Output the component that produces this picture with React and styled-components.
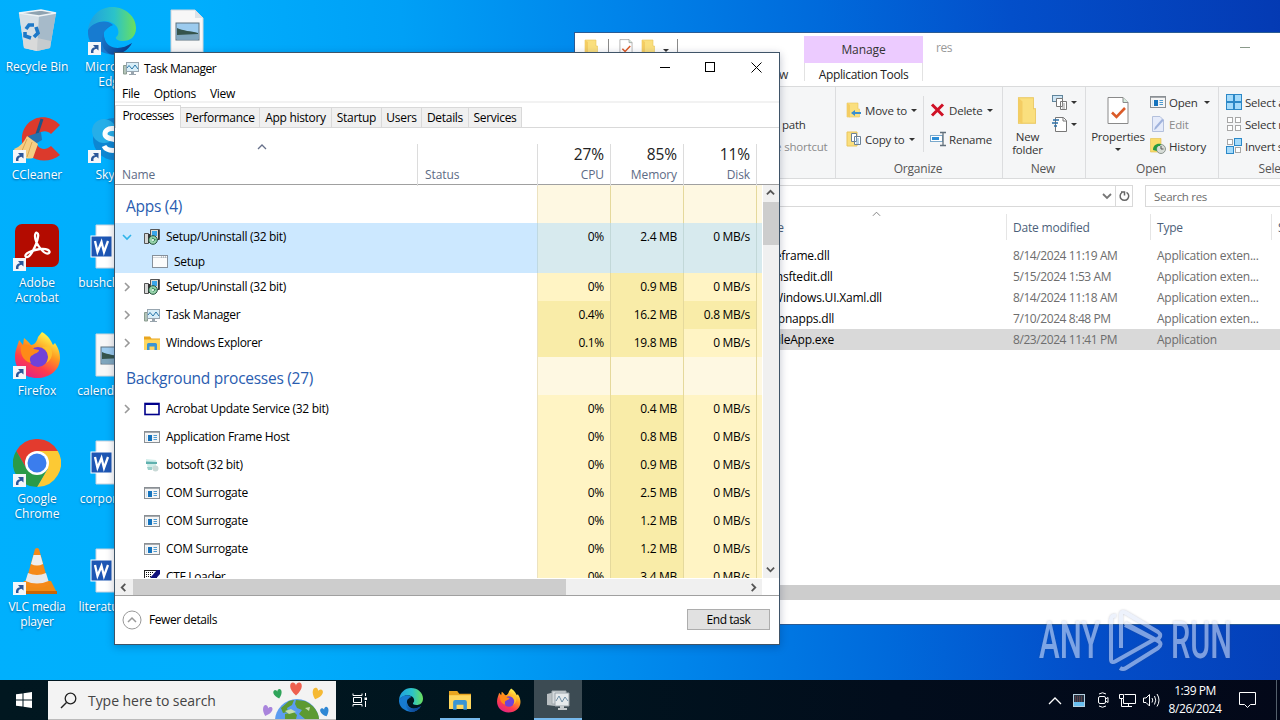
import React from "react";
import styled, { createGlobalStyle } from "styled-components";

const GlobalStyle = createGlobalStyle`
  * {
    box-sizing: border-box;
  }

  body {
    margin: 0;
    overflow: hidden;
    font-family: "Open Sans", "Noto Sans", sans-serif;
    font-size: 12px;
    line-height: 15px;
    letter-spacing: -0.2px;
    white-space: nowrap;
    color: #000;
  }

  svg {
    display: block;
    flex: none;
  }
`;

const Desktop = styled.div`
  position: relative;
  width: 1280px;
  height: 720px;
  overflow: hidden;
  display: flex;
  flex-direction: column;
  justify-content: space-between;
  background: linear-gradient(
    84deg,
    #00b0fd 0%,
    #00aefd 20%,
    #00a0f6 35%,
    #0084ea 51%,
    #006adb 66%,
    #034fca 80%,
    #043ab3 100%
  );
`;

/* desktop shortcuts */

const ShortcutGrid = styled.div`
  display: grid;
  grid-template-columns: repeat(3, 75px);
  grid-auto-rows: 108px;
  padding-top: 7px;
`;

const Shortcut = styled.div`
  display: flex;
  flex-direction: column;
  align-items: center;
  gap: 4px;
  color: #fff;
  text-align: center;
  letter-spacing: ${(p) => p.$spacing || "0"};
  text-shadow: 0 1px 2px rgba(0, 40, 90, 0.6);
  white-space: pre-line;
  padding-right: 1px;
`;

const ShortcutIcon = styled.div`
  position: relative;
  width: 48px;
  height: 48px;
`;

const ArrowBadge = styled.svg`
  position: absolute;
  left: 0;
  bottom: 0;
`;

/* windows */

const ExplorerWindow = styled.div`
  position: absolute;
  left: 574px;
  top: 32px;
  width: 760px;
  height: 593px;
  border: 1px solid #2a5b94;
  background: #fff;
  display: flex;
  flex-direction: column;
`;

const TitleRow = styled.div`
  height: 30px;
  display: flex;
  padding-left: 9px;
`;

const QuickAccess = styled.div`
  width: 220px;
  padding-top: 6px;
  display: flex;
  gap: 8px;
`;

const QuickDivider = styled.div`
  width: 1px;
  height: 14px;
  background: #8a8a8a;
  margin-right: 2px;
`;

const ManageTab = styled.div`
  width: 119px;
  height: 27px;
  margin-top: 3px;
  background: #eccbff;
  color: #333;
  text-align: center;
  line-height: 28px;
  letter-spacing: -0.1px;
`;

const WindowTitle = styled.div`
  width: 317px;
  padding: 7px 0 0 13px;
  color: #999;
  letter-spacing: -0.4px;
`;

const MinimizeMark = styled.div`
  width: 10px;
  height: 1px;
  margin-top: 14px;
  background: #8a9a8a;
`;

const RibbonTabs = styled.div`
  height: 23px;
  display: flex;
  line-height: 24px;
`;

const ViewTab = styled.div`
  width: 229px;
  padding-right: 16px;
  text-align: right;
  color: #333;
`;

const ToolsTab = styled.div`
  width: 119px;
  height: 18px;
  text-align: center;
  border: solid #e2e2e2;
  border-width: 0 1px;
  color: #222;
  letter-spacing: -0.35px;
`;

const Ribbon = styled.div`
  height: 93px;
  display: flex;
  background: #f5f6f7;
  border-top: 1px solid #dadbdc;
  border-bottom: 1px solid #dadbdc;
  color: #333;
`;

const RibbonGroup = styled.div`
  width: ${(p) => p.$width}px;
  flex: none;
  display: flex;
  flex-direction: column;
  justify-content: space-between;
  border-right: 1px solid #dcdddf;
  padding-bottom: 2px;
`;

const RibbonTools = styled.div`
  display: flex;
  height: 73px;
`;

const GroupCaption = styled.div`
  text-align: center;
  color: #555;
  padding-left: ${(p) => p.$shift || 0}px;
  padding-right: 2px;
`;

const ToolColumn = styled.div`
  display: flex;
  flex-direction: column;
  gap: ${(p) => p.$gap}px;
  padding: ${(p) => p.$padding};
  width: ${(p) => (p.$width ? `${p.$width}px` : "auto")};
`;

const Tool = styled.div`
  display: flex;
  align-items: center;
  gap: 3px;
  height: 16px;
  font-size: 11.5px;
  color: ${(p) => (p.$disabled ? "#8b8b8b" : "#333")};
  letter-spacing: ${(p) => p.$spacing || "-0.2px"};
`;

const ToolDivider = styled.div`
  width: 1px;
  height: 56px;
  margin-top: 9px;
  background: #dcdddf;
`;

const BigTool = styled.div`
  width: ${(p) => p.$width}px;
  padding-top: 9px;
  display: flex;
  flex-direction: column;
  align-items: center;
  gap: 5px;
  text-align: center;
  white-space: pre-line;
  font-size: 11.5px;
  line-height: 13px;
  letter-spacing: -0.2px;
`;

const DownMark = styled.i`
  border: solid transparent;
  border-width: 3px 3px 0;
  border-top-color: #333;
  width: 0;
  height: 0;
  margin: ${(p) => p.$margin || "0 0 0 1px"};
`;

const AddressRow = styled.div`
  display: flex;
  gap: 12px;
  height: 31px;
  padding-top: 6px;
`;

const AddressBox = styled.div`
  width: 558px;
  height: 22px;
  border: 1px solid #d9d9d9;
  display: flex;
  justify-content: flex-end;
`;

const AddressButton = styled.div`
  width: 17px;
  display: flex;
  align-items: center;
  justify-content: center;
  border-left: 1px solid ${(p) => (p.$divided ? "#d9d9d9" : "transparent")};
`;

const SearchBox = styled.div`
  flex: 1;
  height: 22px;
  border: 1px solid #d9d9d9;
  padding: 3px 8px;
  color: #6d6d6d;
  font-size: 11.5px;
  letter-spacing: -0.3px;
`;

const FileHeader = styled.div`
  display: grid;
  grid-template-columns: 432px 144px 121px 60px;
  height: 35px;
  padding-top: 4px;
  color: #4c5f7a;
`;

const FileHeaderCell = styled.div`
  position: relative;
  height: 26px;
  border-right: 1px solid #e5e5e5;
  padding: ${(p) => p.$padding || "6px 0 0 6px"};
`;

const FileRow = styled.div`
  display: grid;
  grid-template-columns: 431px 144px 181px;
  height: 21px;
  line-height: 22px;
  background: ${(p) => (p.$selected ? "#d9d9d9" : "#fff")};
`;

const FileName = styled.div`
  padding-left: 197px;
`;

const FileMeta = styled.div`
  padding-left: 7px;
  color: #6d6d6d;
  letter-spacing: ${(p) => p.$spacing || "-0.42px"};
`;

const FileScroll = styled.div`
  height: 15px;
  margin-top: auto;
  margin-bottom: 24px;
  background: #cdcdcd;
`;

const TaskWindow = styled.div`
  position: absolute;
  left: 114px;
  top: 52px;
  width: 666px;
  height: 593px;
  border: 1px solid #3f5468;
  background: #fff;
  display: flex;
  flex-direction: column;
  box-shadow: 0 2px 8px rgba(0, 20, 60, 0.25);
`;

const TaskTitle = styled.div`
  height: 30px;
  display: flex;
  align-items: center;
  gap: 5px;
  padding-left: 8px;
  letter-spacing: -0.5px;
`;

const WindowButtons = styled.div`
  margin-left: auto;
  display: flex;
  padding-bottom: 1px;
`;

const WindowButton = styled.div`
  width: 45.5px;
  display: flex;
  justify-content: center;
`;

const MenuBar = styled.div`
  height: 20px;
  display: flex;
  gap: 14px;
  padding: 3px 7px 0;
  border-bottom: 2px solid #f2f2f2;
  letter-spacing: -0.3px;
`;

const TabStrip = styled.div`
  height: 25px;
  display: flex;
  align-items: flex-end;
  border-bottom: 1px solid #d9d9d9;
`;

const Tab = styled.div`
  width: ${(p) => p.$width}px;
  height: ${(p) => (p.$active ? 23 : 20)}px;
  margin-bottom: ${(p) => (p.$active ? -1 : 0)}px;
  line-height: 20px;
  text-align: center;
  letter-spacing: ${(p) => (p.$active ? "-0.5px" : "-0.3px")};
  background: ${(p) => (p.$active ? "#fff" : "#f0f0f0")};
  border: 1px solid #d9d9d9;
  border-left-width: ${(p) => (p.$active ? 1 : 0)}px;
  border-bottom: 0;
`;

const columns = "303px 120px 73px 73px 73px 1fr";

const TableHead = styled.div`
  display: grid;
  grid-template-columns: ${columns};
  height: 57px;
  padding-top: 16px;
  border-bottom: 1px solid #a0a0a0;
`;

const HeadCell = styled.div`
  position: relative;
  display: flex;
  flex-direction: column;
  justify-content: flex-end;
  align-items: ${(p) => (p.$numeric ? "flex-end" : "flex-start")};
  padding: 0 6px 4px 7px;
  border-right: 1px solid ${(p) => (p.$last ? "transparent" : "#dcdcdc")};
  color: #5d6b85;
  letter-spacing: -0.1px;
`;

const Total = styled.div`
  font-size: 15.5px;
  line-height: 20px;
  margin-bottom: 3px;
  color: #222;
  letter-spacing: -0.1px;
`;

const SortMark = styled.svg`
  position: absolute;
  left: 142px;
  top: 0;
`;

const FileSortMark = styled.svg`
  position: absolute;
  left: 297px;
  top: -3px;
`;

const TableArea = styled.div`
  height: 394px;
  display: flex;
`;

const Rows = styled.div`
  width: 647px;
  height: 393px;
  overflow: hidden;
`;

const Row = styled.div`
  display: grid;
  grid-template-columns: ${columns};
  height: ${(p) => p.$height}px;
  background: ${(p) => (p.$selected ? "#cce8ff" : "#fff")};
`;

const NameCell = styled.div`
  grid-column: span 2;
  display: flex;
  align-items: center;
  padding-left: ${(p) => (p.$child ? 37 : 7)}px;
  border-right: 1px solid ${(p) => (p.$selected ? "#bfd9e2" : "#ece2c0")};
`;

const ProcessName = styled.div`
  padding-bottom: 1px;
  letter-spacing: -0.32px;
`;

const Expander = styled.div`
  width: 22px;
  padding-bottom: 1px;
`;

const ProcessIcon = styled.div`
  width: 22px;
`;

const GroupName = styled(NameCell)`
  padding: 5px 0 0 11px;
  font-size: 15.5px;
  letter-spacing: -0.27px;
  color: #2a5db0;
`;

const heat = {
  group: "#fef8e2",
  low: "#fff4c4",
  high: "#f9eca8",
  selected: "#d7eaee",
};

const ValueCell = styled.div`
  background: ${(p) => heat[p.$heat]};
  border-right: 1px solid ${(p) => (p.$heat === "selected" ? "#c2d8d8" : "#e5d99c")};
  padding: 0 6px 1px 0;
  display: flex;
  align-items: center;
  justify-content: flex-end;
  letter-spacing: -0.3px;
`;

const EdgeCell = styled.div`
  background: ${(p) => heat[p.$heat]};
`;

const VerticalScroll = styled.div`
  width: 16px;
  margin-left: auto;
  background: #f0f0f0;
  height: 393px;
  display: flex;
  flex-direction: column;
  align-items: center;
`;

const VerticalThumb = styled.div`
  width: 16px;
  height: 43px;
  margin-bottom: auto;
  background: #cdcdcd;
`;

const ScrollArrow = styled.div`
  width: 17px;
  height: 17px;
  padding-right: 1px;
  display: flex;
  align-items: center;
  justify-content: center;
`;

const HorizontalScroll = styled.div`
  height: 16px;
  width: 647px;
  display: flex;
  justify-content: space-between;
  align-items: center;
  background: #f0f0f0;
`;

const HorizontalThumb = styled.div`
  width: 433px;
  height: 16px;
  background: #cdcdcd;
  margin: 0 auto 0 1px;
`;

const TaskFooter = styled.div`
  flex: 1;
  border-top: 1px solid #a0a0a0;
  display: flex;
  align-items: center;
  gap: 7px;
  padding: 0 9px 1px 7px;
  letter-spacing: -0.45px;
`;

const EndButton = styled.div`
  width: 83px;
  height: 21px;
  margin-left: auto;
  border: 1px solid #adadad;
  background: #e1e1e1;
  text-align: center;
  line-height: 19px;
`;

/* watermark */

const Watermark = styled.div`
  position: absolute;
  left: 1039px;
  top: 608px;
  width: 194px;
  height: 64px;
  display: flex;
  justify-content: space-between;
  align-items: center;
  color: #e0e8fb;
  opacity: 0.55;
  filter: drop-shadow(0 0 1px rgba(60, 70, 100, 0.5));
`;

const WatermarkWord = styled.div`
  width: 62px;
  padding-top: 2px;
  font-family: Roboto, sans-serif;
  font-size: 51px;
  line-height: 64px;
  font-weight: 500;
  letter-spacing: 0;
  transform: scaleX(${(p) => p.$squeeze});
  transform-origin: left;
`;

/* taskbar */

const Taskbar = styled.div`
  height: 40px;
  display: flex;
  background: linear-gradient(90deg, #011720, #00151f 40%, #020d1c 70%, #030819);
`;

const TaskbarSlot = styled.div`
  width: ${(p) => p.$width}px;
  display: flex;
  align-items: center;
  justify-content: center;
  background: ${(p) => (p.$active ? "#3c4b53" : "transparent")};
  box-shadow: ${(p) => (p.$running ? "inset 0 -2px 0 #76b9ed" : "none")};
  margin: ${(p) => p.$margin || 0};
`;

const TaskbarSearch = styled.div`
  width: 288px;
  margin-top: 1px;
  background: #f3f3f3;
  border-bottom: 1px solid #bbb;
  display: flex;
  align-items: center;
  padding-left: 12px;
  color: #444;
  font-size: 14px;
  letter-spacing: -0.05px;
  gap: 11px;
`;

const SearchArt = styled.svg`
  margin-left: auto;
`;

const Tray = styled.div`
  margin-left: auto;
  display: flex;
  align-items: center;
  color: #fff;
`;

const TraySlot = styled.div`
  width: 24px;
  display: flex;
  justify-content: center;
`;

const Clock = styled.div`
  width: 64px;
  text-align: center;
  line-height: 18px;
  letter-spacing: -0.45px;
`;

const ShowDesktop = styled.div`
  width: 4px;
  height: 40px;
  border-left: 1px solid #55606c;
`;

/* icons */

const Chevron = ({ dir, color = "#555", size = 8, weight = 1.6 }) => {
  const d = {
    up: "M1 6 5 2 9 6",
    down: "M1 3 5 7 9 3",
    left: "M7 1 3 5 7 9",
    right: "M3 1 7 5 3 9",
  }[dir];
  return (
    <svg width={size} height={size} viewBox="0 0 10 10">
      <path d={d} fill="none" stroke={color} strokeWidth={weight} />
    </svg>
  );
};

const ShortcutArrow = () => (
  <ArrowBadge width="13" height="13" viewBox="0 0 13 13">
    <rect width="13" height="13" fill="#f4f6fa" />
    <path d="M3 11C2.500 7.500 4 5.500 7 5.200L5 3H10.500V8.500L8.500 6.700C6 7 5 8.500 5.500 11Z" fill="#2b579a" />
  </ArrowBadge>
);

const RecycleBin = () => (
  <svg width="48" height="48" viewBox="0 0 48 48">
    <path d="M6 6 28 3 43 6 37 41 24 44 11 41Z" fill="#c5d3de" />
    <path d="M6 6 26 9 24 44 11 41Z" fill="#d5dfe6" />
    <path d="M26 9 43 6 37 41 24 44Z" fill="#a6bac9" />
    <path d="M6 6 28 3 43 6 26 9Z" fill="#8fa3b1" stroke="#eef3f6" strokeWidth="1.500" />
    <path d="M10 33 24 31 38 34 37 41 24 44 11 41Z" fill="#dcd7d2" opacity="0.600" />
    <g fill="none" stroke="#1c78c8" strokeWidth="3.600">
      <path d="M13 22 16 18 21 18" />
      <path d="M23 20 25 26 21 30" />
      <path d="M18 31 12 29 12 25" />
    </g>
  </svg>
);

const EdgeLogo = ({ size }) => (
  <svg width={size} height={size} viewBox="0 0 48 48">
    <defs>
      <linearGradient id="edgeTop" x1="0" x2="1">
        <stop offset="0" stopColor="#1f9fe0" />
        <stop offset="0.550" stopColor="#2bc3c9" />
        <stop offset="1" stopColor="#6be05c" />
      </linearGradient>
      <linearGradient id="edgeLow" x1="0" x2="1" y2="0.600">
        <stop offset="0" stopColor="#1b83d8" />
        <stop offset="1" stopColor="#0c3f8e" />
      </linearGradient>
    </defs>
    <path d="M0 23C2 9 12 0 24 0 38 0 48 10 48 21 48 30 42 34 35 34 30 34 27 32 28 30 31 28 31 24 29 20 23 11 8 13 0 23Z" fill="url(#edgeTop)" />
    <path d="M0 23C6 14 19 12 25 18 17 19 14 26 17 33 21 43 34 44 44 36 39 45 30 49 20 47 7 44-1 35 0 23Z" fill="#177bd0" />
    <path d="M25 18C17 18 14 26 17 33 21 43 34 43 44 36 39 45 30 49 22 47 11 42 10 24 25 18Z" fill="url(#edgeLow)" />
  </svg>
);

const FirefoxLogo = ({ size, id }) => (
  <svg width={size} height={size} viewBox="0 0 48 48">
    <defs>
      <linearGradient id={id} x1="0.800" y1="0" x2="0.250" y2="1">
        <stop offset="0.100" stopColor="#fff04a" />
        <stop offset="0.400" stopColor="#ff9a1f" />
        <stop offset="0.700" stopColor="#ff3d4c" />
        <stop offset="1" stopColor="#e0208a" />
      </linearGradient>
    </defs>
    <path d="M29 1C36 5 38 10 40 14L42 12C46 18 47 23 47 27 47 39 37 47 24 47 11 47 2 38 2 26 2 19 5 14 6 9L10 14 11 7C14 9 16 12 18 14 22 14 24 10 25 6Z" fill={`url(#${id})`} />
    <circle cx="25" cy="26" r="10" fill="#7042d8" />
    <path d="M8 15C13 12 18 14 21 18L26 19C26 22 22 22 20 24 17 25 16 28 18 32 9 30 7 21 8 15Z" fill="#ff8a18" />
    <path d="M29 16C35 19 37 27 33 32 39 29 41 22 37 15Z" fill="#ffc52e" opacity="0.800" />
  </svg>
);

const ChromeLogo = () => (
  <svg width="48" height="48" viewBox="0 0 48 48">
    <path d="M24 24 3.200 12A24 24 0 0 1 44.800 12Z" fill="#e33b2e" />
    <path d="M24 12H44.800A24 24 0 0 1 24 48L34.500 30Z" fill="#fcc934" />
    <path d="M3.200 12 13.600 30 24 24V12Z" fill="#e33b2e" />
    <path d="M3.200 12A24 24 0 0 0 24 48L34.500 30H13.600Z" fill="#2a9a48" />
    <circle cx="24" cy="24" r="12" fill="#fff" />
    <circle cx="24" cy="24" r="9.500" fill="#3b7ded" />
  </svg>
);

const CCleanerLogo = () => (
  <svg width="48" height="48" viewBox="0 0 48 48">
    <path d="M47 10 38 19C33 14 24 16 23 25 23 33 31 37 38 31L47 40C33 51 11 45 9 27 7 4 32-6 47 10Z" fill="#dc3a2c" />
    <path d="M29 4 23 22" stroke="#1d5587" strokeWidth="3" />
    <path d="M15 21 28 17 29 25 22 29Z" fill="#2673b0" />
    <path d="M14 21 25 29 20 43C14 45 5 42 1 34 7 32 11 27 14 21Z" fill="#f5ce83" />
    <path d="M14 24 8 38M19 27 14 42" stroke="#d9a652" />
  </svg>
);

const SkypeLogo = () => (
  <svg width="48" height="48" viewBox="0 0 48 48">
    <circle cx="26" cy="24" r="21" fill="#0d86d2" />
    <circle cx="16" cy="16" r="12" fill="#26aee8" />
    <path d="M33 17C30 12 17 12 17 19 17 26 33 22 33 30 33 37 19 37 16 31" fill="none" stroke="#fff" strokeWidth="5" />
  </svg>
);

const AcrobatLogo = () => (
  <svg width="48" height="48" viewBox="0 0 48 48">
    <rect x="2" y="1" width="44" height="43" rx="7" fill="#b30b00" />
    <path d="M13 34C10 31 19 27 27 26 34 25 38 28 36 30 32 33 22 21 22 13 22 8 26 9 25 14 24 21 17 36 13 34Z" fill="none" stroke="#fff" strokeWidth="2.300" />
  </svg>
);

const VlcLogo = () => (
  <svg width="48" height="48" viewBox="0 0 48 48">
    <path d="M11 34H38L44 46H5Z" fill="#f08a15" />
    <path d="M5 44H44V47H5Z" fill="#c96505" />
    <path d="M22 2Q24 0 26 2L36 38Q24 44 12 38Z" fill="#f58a18" />
    <path d="M20.500 8H27.500L30 17Q24 20 18 17Z" fill="#eee" />
    <path d="M15 26Q24 30 33 26L35.500 34Q24 39 12.500 34Z" fill="#e8e8e8" />
  </svg>
);

const WordDocument = () => (
  <svg width="48" height="48" viewBox="0 0 48 48">
    <path d="M8 2H33L41 10V45H8Z" fill="#fff" stroke="#c9d3df" />
    <rect x="3" y="13" width="21" height="21" fill="#1d56b4" stroke="#fff" />
    <path d="M7 18 9.500 29 13.500 19 16 29 20 18" fill="none" stroke="#fff" strokeWidth="2.300" />
  </svg>
);

const PictureDocument = () => (
  <svg width="48" height="48" viewBox="0 0 48 48">
    <path d="M8 3H32L40 11V45H8Z" fill="#f7f7f7" stroke="#d0d6db" />
    <path d="M32 3V11H40Z" fill="#dbe2e8" />
    <rect x="13" y="16" width="23" height="17" fill="#9ccbee" stroke="#5d7380" />
    <path d="M14 21C20 24 28 24 35 26V29H14Z" fill="#35544c" />
    <path d="M14 28 35 27V32H14Z" fill="#7fa6bd" />
  </svg>
);

const MonitorIcon = ({ size = 16 }) => (
  <svg width={size} height={size} viewBox="0 0 16 16">
    <path d="M.5 5.500H3.500V14H.5Z" fill="#b3c4b8" stroke="#8a9c90" />
    <rect x="3.500" y="2.500" width="12" height="9" fill="#d8eef8" stroke="#98a6b0" />
    <path d="M4 8 6 5.500 9 9 12 5 15 9" fill="none" stroke="#2a78aa" />
    <path d="M8 12H11V14H13V15H6V14H8Z" fill="#98a4ad" />
  </svg>
);

const StackedMonitors = () => (
  <svg width="24" height="24" viewBox="0 0 24 24">
    <path d="M1 6 9 4V18L1 17Z" fill="#b9bfc2" />
    <path d="M6 3H20V16H6Z" fill="#d5dadd" stroke="#a1a9ad" />
    <path d="M9 5H23V18H9Z" fill="#e6eaec" stroke="#9ba4aa" />
    <path d="M10 13 13 8 16 14 19 9 22 13" fill="none" stroke="#6e8da3" />
    <path d="M14 18H18V20H21V22H12V20H14Z" fill="#c4c9cc" />
  </svg>
);

const InstallerIcon = () => (
  <svg width="16" height="16" viewBox="0 0 16 16">
    <path d="M.5 4.500H4.500V14.500H.5Z" fill="#d6d6d6" stroke="#555" />
    <path d="M6.500.5H15.500V10.500H6.500Z" fill="#dedbd4" stroke="#555" />
    <rect x="8" y="2" width="5" height="5" fill="#3aa5ea" />
    <path d="M14 1H15V11H14Z" fill="#333" />
    <path d="M4 5H6V14H4Z" fill="#333" />
    <circle cx="9" cy="11" r="4.300" fill="#97d3ac" stroke="#23503a" />
    <path d="M8 8.500 12 10.500 9 13Z" fill="#2d8650" />
    <circle cx="9" cy="11" r="1" fill="#fff" />
  </svg>
);

const WindowIcon = () => (
  <svg width="16" height="14" viewBox="0 0 16 14">
    <rect x=".5" y=".5" width="15" height="12" fill="#fbfbfb" stroke="#87909a" />
    <path d="M1 2.500H15" stroke="#d4d8dc" />
    <path d="M9 2H10M11 2H12M13 2H14" stroke="#8a939c" />
  </svg>
);

const ServiceIcon = () => (
  <svg width="16" height="14" viewBox="0 0 16 14">
    <rect x="1" y="1.500" width="14" height="11" fill="#fff" stroke="#00008b" strokeWidth="1.600" />
    <path d="M1 2H15" stroke="#00008b" strokeWidth="2" />
  </svg>
);

const HostIcon = () => (
  <svg width="16" height="12" viewBox="0 0 16 12">
    <rect x=".5" y=".5" width="15" height="11" fill="#f5f5f5" stroke="#8a8f94" />
    <path d="M1 1.500H15" stroke="#a6aaae" />
    <rect x="4" y="4" width="4" height="6" fill="#1573bd" />
    <path d="M9.500 4.500H13M9.500 6.500H13M9.500 8.500H13" stroke="#4f9bd0" />
    <path d="M2 4H3V10H2Z" fill="#cfe3f2" />
  </svg>
);

const BotsoftIcon = () => (
  <svg width="16" height="16" viewBox="0 0 16 16">
    <path d="M2 2 12 3 13 6 2 5Z" fill="#d2eeeb" />
    <path d="M2 4.500 13 5V7H2Z" fill="#5fb0ae" />
    <path d="M3 7H12V12H4Z" fill="#cfece8" />
    <circle cx="11.500" cy="11.500" r="3" fill="#c8d9d6" />
    <path d="M3 10H8V13H4Z" fill="#9bd0cb" />
  </svg>
);

const CtfIcon = () => (
  <svg width="16" height="16" viewBox="0 0 16 16">
    <rect x=".5" y="1.500" width="12" height="12" fill="#fff" stroke="#222" />
    <path d="M2 3.500H10M2 5.500H8M2 7.500H7M2 9.500H6" stroke="#111" strokeDasharray="1 1" />
    <path d="M13 1H16V5L9 13H5L6 9Z" fill="#11117b" />
  </svg>
);

const ExplorerFolder = ({ size = 16 }) => (
  <svg width={size} height={size} viewBox="0 0 16 16">
    <path d="M0 1.500H6L7.500 3.500H16V14.500H0Z" fill="#e9a620" />
    <path d="M0 4.500H16V14.500H0Z" fill="#ffd75e" />
    <path d="M3 15V9.500Q3 8 4.500 8H11.500Q13 8 13 9.500V15H10.500V11.500H5.500V15Z" fill="#3a95d4" />
  </svg>
);

const PlainFolder = ({ width = 16, height = 16, children }) => (
  <svg width={width} height={height} viewBox="0 0 16 16" preserveAspectRatio="none">
    <path d="M1 1H12V7H13.500V15H1Z" fill="#fadf7e" stroke="#eac65c" strokeWidth=".6" />
    <path d="M1 1 4 3V15.500L1 14Z" fill="#f4cd63" />
    {children}
  </svg>
);

const CheckPage = ({ width = 14, height = 17 }) => (
  <svg width={width} height={height} viewBox="0 0 22 28">
    <path d="M1 1H16L21 6V27H1Z" fill="#fff" stroke="#8a8a8a" />
    <path d="M16 1V6H21" fill="#d5eddd" stroke="#8a8a8a" />
    <path d="M5 16 9.500 20.500 18 11.500" fill="none" stroke="#db5b28" strokeWidth="2.600" />
  </svg>
);

const CopyIcon = () => (
  <svg width="16" height="16" viewBox="0 0 16 16">
    <path d="M1 1H11V15H1Z" fill="#fadf7e" stroke="#eac65c" />
    <path d="M5.500 2.500H10.500V10.500H5.500ZM8.500 5.500H14.500V13.500H8.500Z" fill="#fff" stroke="#6d8296" />
    <path d="M10 8H13M10 10H13M10 12H13" stroke="#79a8cf" />
  </svg>
);

const DeleteIcon = () => (
  <svg width="16" height="16" viewBox="0 0 16 16">
    <path d="M2 2.500 13 13.500M13 2.500 2 13.500" stroke="#cf1126" strokeWidth="3" />
  </svg>
);

const RenameIcon = () => (
  <svg width="16" height="16" viewBox="0 0 16 16">
    <rect x=".5" y="4.500" width="12" height="6" fill="#fff" stroke="#7aa9cc" />
    <rect x="2" y="6" width="7" height="3" fill="#2d8ed6" />
    <path d="M10 1.500H16M13 1V14M10 14.500H16" stroke="#62707c" strokeWidth="1.300" fill="none" />
  </svg>
);

const NewItemIcon = () => (
  <svg width="16" height="17" viewBox="0 0 16 17">
    <rect x=".5" y="1.500" width="10" height="6" fill="#cfe5f4" stroke="#60859c" />
    <path d="M4.500 4.500H10.500V12.500H4.500ZM8.500 7.500H14.500V15.500H8.500Z" fill="#fff" stroke="#777" />
    <path d="M10 10H13M10 12H13M10 14H13" stroke="#999" />
  </svg>
);

const EasyAccessIcon = () => (
  <svg width="16" height="17" viewBox="0 0 16 17">
    <path d="M3.500 1.500H11.500L14.500 4.500V15.500H3.500Z" fill="#fff" stroke="#777" />
    <path d="M1 4H7M0 7H6M2 10H5" stroke="#2d70a8" strokeWidth="1.300" />
    <path d="M11 2V5H14" fill="none" stroke="#777" />
  </svg>
);

const EditIcon = () => (
  <svg width="16" height="16" viewBox="0 0 16 16">
    <path d="M2.500.5H10L13.500 4V15.500H2.500Z" fill="#e5ebfa" stroke="#b3c0dc" />
    <path d="M14 4 6 13 4 14 5 11 12 3Z" fill="#9fb2dc" />
  </svg>
);

const HistoryIcon = () => (
  <svg width="16" height="16" viewBox="0 0 16 16">
    <path d="M.5.5H11V14H.5Z" fill="#fadc6b" stroke="#e2bd48" strokeWidth=".6" />
    <circle cx="11" cy="11" r="4.500" fill="#d8ddd8" stroke="#8c9690" />
    <path d="M3 12C3 7 7 5 11 6L10 8C7 8 6 10 7 13Z" fill="#289a43" />
    <path d="M11 8V11H13.500" fill="none" stroke="#555" />
  </svg>
);

const selectTiles = {
  all: [
    [0.5, 0.5, true],
    [8.5, 0.5, true],
    [0.5, 8.5, true],
    [8.5, 8.5, true],
  ],
  none: [
    [1.5, 1.5, false],
    [9.5, 1.5, false],
    [1.5, 9.5, false],
    [9.5, 9.5, false],
  ],
  invert: [
    [1.5, 1.5, false],
    [8.5, 0.5, true],
    [0.5, 8.5, true],
    [9.5, 9.5, false],
  ],
};

const SelectIcon = ({ kind }) => (
  <svg width="16" height="16" viewBox="0 0 16 16">
    {selectTiles[kind].map(([x, y, on]) => (
      <rect
        key={`${x}-${y}`}
        x={x}
        y={y}
        width={on ? 7 : 5}
        height={on ? 7 : 5}
        fill={on ? "#a5dbfb" : "#fff"}
        stroke={on ? "#2c88c7" : "#a7a7a7"}
      />
    ))}
  </svg>
);

/* data */

const shortcuts = [
  { label: "Recycle Bin", icon: <RecycleBin />, plain: true },
  { label: "Microsoft\nEdge", icon: <EdgeLogo size={48} />, spacing: "0.1px" },
  { label: "", icon: <PictureDocument />, plain: true },
  { label: "CCleaner", icon: <CCleanerLogo /> },
  { label: "Skype", icon: <SkypeLogo /> },
  null,
  { label: "Adobe\nAcrobat", icon: <AcrobatLogo /> },
  { label: "bushclient...", icon: <WordDocument />, plain: true },
  null,
  { label: "Firefox", icon: <FirefoxLogo size={48} id="foxDesktop" /> },
  { label: "calendarre...", icon: <PictureDocument />, plain: true },
  null,
  { label: "Google\nChrome", icon: <ChromeLogo /> },
  { label: "corporate...", icon: <WordDocument />, plain: true },
  null,
  { label: "VLC media\nplayer", icon: <VlcLogo />, spacing: "-0.2px" },
  { label: "literatures...", icon: <WordDocument />, plain: true },
];

const tabs = [
  ["Performance", 79],
  ["App history", 72],
  ["Startup", 50],
  ["Users", 40],
  ["Details", 47],
  ["Services", 53],
];

const processes = [
  { group: "Apps (4)" },
  { name: "Setup/Uninstall (32 bit)", icon: <InstallerIcon />, open: true, cpu: "0%", memory: "2.4 MB", disk: "0 MB/s", selected: true },
  { name: "Setup", icon: <WindowIcon />, child: true, selected: true },
  { name: "Setup/Uninstall (32 bit)", icon: <InstallerIcon />, more: true, cpu: "0%", memory: "0.9 MB", disk: "0 MB/s" },
  { name: "Task Manager", icon: <MonitorIcon />, more: true, cpu: "0.4%", memory: "16.2 MB", disk: "0.8 MB/s" },
  { name: "Windows Explorer", icon: <ExplorerFolder />, more: true, cpu: "0.1%", memory: "19.8 MB", disk: "0 MB/s" },
  { group: "Background processes (27)" },
  { name: "Acrobat Update Service (32 bit)", icon: <ServiceIcon />, more: true, cpu: "0%", memory: "0.4 MB", disk: "0 MB/s" },
  { name: "Application Frame Host", icon: <HostIcon />, cpu: "0%", memory: "0.8 MB", disk: "0 MB/s" },
  { name: "botsoft (32 bit)", icon: <BotsoftIcon />, cpu: "0%", memory: "0.9 MB", disk: "0 MB/s" },
  { name: "COM Surrogate", icon: <HostIcon />, cpu: "0%", memory: "2.5 MB", disk: "0 MB/s" },
  { name: "COM Surrogate", icon: <HostIcon />, cpu: "0%", memory: "1.2 MB", disk: "0 MB/s" },
  { name: "COM Surrogate", icon: <HostIcon />, cpu: "0%", memory: "1.2 MB", disk: "0 MB/s" },
  { name: "CTF Loader", icon: <CtfIcon />, cpu: "0%", memory: "3.4 MB", disk: "0 MB/s" },
];

const files = [
  ["ieframe.dll", "8/14/2024 11:19 AM", "Application exten..."],
  ["msftedit.dll", "5/15/2024 1:53 AM", "Application exten..."],
  ["Windows.UI.Xaml.dll", "8/14/2024 11:18 AM", "Application exten..."],
  ["vpnapps.dll", "7/10/2024 8:48 PM", "Application exten..."],
  ["FileApp.exe", "8/23/2024 11:41 PM", "Application"],
];

const valueHeat = (process, value) => {
  if (process.selected) return "selected";
  return value === "0%" || value === "0 MB/s" ? "low" : "high";
};

const ProcessRow = ({ process }) => {
  if (process.group) {
    return (
      <Row $height={38}>
        <GroupName>{process.group}</GroupName>
        <ValueCell $heat="group" />
        <ValueCell $heat="group" />
        <ValueCell $heat="group" />
        <EdgeCell $heat="group" />
      </Row>
    );
  }
  return (
    <Row $height={process.child ? 22 : 28} $selected={process.selected}>
      <NameCell $child={process.child} $selected={process.selected}>
        {!process.child && (
          <Expander>
            {process.open && <Chevron dir="down" color="#2fb4e9" size={10} />}
            {process.more && <Chevron dir="right" color="#999" size={10} />}
          </Expander>
        )}
        <ProcessIcon>{process.icon}</ProcessIcon>
        <ProcessName>{process.name}</ProcessName>
      </NameCell>
      <ValueCell $heat={valueHeat(process, process.cpu)}>{process.cpu}</ValueCell>
      <ValueCell $heat={process.selected ? "selected" : "high"}>{process.memory}</ValueCell>
      <ValueCell $heat={valueHeat(process, process.disk)}>{process.disk}</ValueCell>
      <EdgeCell $heat={process.selected ? "selected" : "low"} />
    </Row>
  );
};

const Explorer = () => (
  <ExplorerWindow>
    <TitleRow>
      <QuickAccess>
        <PlainFolder />
        <QuickDivider />
        <CheckPage />
        <PlainFolder />
        <DownMark $margin="10px 0 0 -2px" />
        <QuickDivider />
      </QuickAccess>
      <ManageTab>Manage</ManageTab>
      <WindowTitle>res</WindowTitle>
      <MinimizeMark />
    </TitleRow>
    <RibbonTabs>
      <ViewTab>View</ViewTab>
      <ToolsTab>Application Tools</ToolsTab>
    </RibbonTabs>
    <Ribbon>
      <RibbonGroup $width={261}>
        <ToolColumn $gap={6} $padding="29px 0 0 178px">
          <Tool>Copy path</Tool>
          <Tool $disabled>Paste shortcut</Tool>
        </ToolColumn>
      </RibbonGroup>
      <RibbonGroup $width={167}>
        <RibbonTools>
          <ToolColumn $gap={13} $padding="15px 0 0 10px" $width={87}>
            <Tool>
              <PlainFolder>
                <path d="M15 12H9V14L5 11 9 8V10H15Z" fill="#3a8fd0" />
              </PlainFolder>
              Move to <DownMark />
            </Tool>
            <Tool>
              <CopyIcon />
              Copy to <DownMark />
            </Tool>
          </ToolColumn>
          <ToolDivider />
          <ToolColumn $gap={13} $padding="15px 0 0 6px">
            <Tool>
              <DeleteIcon />
              Delete <DownMark $margin="0 0 0 1px" />
            </Tool>
            <Tool>
              <RenameIcon />
              Rename
            </Tool>
          </ToolColumn>
        </RibbonTools>
        <GroupCaption>Organize</GroupCaption>
      </RibbonGroup>
      <RibbonGroup $width={83}>
        <RibbonTools>
          <BigTool $width={49}>
            <PlainFolder width={22} height={29} />
            {"New\nfolder"}
          </BigTool>
          <ToolColumn $gap={6} $padding="7px 0 0 0">
            <Tool>
              <NewItemIcon />
              <DownMark $margin="0" />
            </Tool>
            <Tool>
              <EasyAccessIcon />
              <DownMark $margin="0" />
            </Tool>
          </ToolColumn>
        </RibbonTools>
        <GroupCaption>New</GroupCaption>
      </RibbonGroup>
      <RibbonGroup $width={133}>
        <RibbonTools>
          <BigTool $width={64}>
            <CheckPage width={22} height={29} />
            Properties
            <DownMark $margin="0" />
          </BigTool>
          <ToolColumn $gap={6} $padding="7px 0 0 0">
            <Tool>
              <HostIcon />
              Open <DownMark $margin="0 0 0 3px" />
            </Tool>
            <Tool $disabled>
              <EditIcon />
              Edit
            </Tool>
            <Tool>
              <HistoryIcon />
              History
            </Tool>
          </ToolColumn>
        </RibbonTools>
        <GroupCaption>Open</GroupCaption>
      </RibbonGroup>
      <RibbonGroup $width={110}>
        <ToolColumn $gap={6} $padding="7px 0 0 7px">
          <Tool>
            <SelectIcon kind="all" />
            Select all
          </Tool>
          <Tool>
            <SelectIcon kind="none" />
            Select none
          </Tool>
          <Tool>
            <SelectIcon kind="invert" />
            Invert selection
          </Tool>
        </ToolColumn>
        <GroupCaption $shift={4}>Select</GroupCaption>
      </RibbonGroup>
    </Ribbon>
    <AddressRow>
      <AddressBox>
        <AddressButton>
          <Chevron dir="down" color="#777" size={10} weight={1.8} />
        </AddressButton>
        <AddressButton $divided>
          <svg width="11" height="12" viewBox="0 0 11 12">
            <path d="M3 2.500A4.300 4.300 0 1 0 7.500 2.300M2 2H5.500V5.500" fill="none" stroke="#666" strokeWidth="1.500" />
          </svg>
        </AddressButton>
      </AddressBox>
      <SearchBox>Search res</SearchBox>
    </AddressRow>
    <FileHeader>
      <FileHeaderCell $padding="6px 0 0 176px">
        Name
        <FileSortMark width="9" height="6" viewBox="0 0 10 6">
          <path d="M1 5 5 1 9 5" fill="none" stroke="#777" />
        </FileSortMark>
      </FileHeaderCell>
      <FileHeaderCell>Date modified</FileHeaderCell>
      <FileHeaderCell>Type</FileHeaderCell>
      <FileHeaderCell>Size</FileHeaderCell>
    </FileHeader>
    {files.map(([name, date, type], i) => (
      <FileRow key={name} $selected={i === 4}>
        <FileName>{name}</FileName>
        <FileMeta>{date}</FileMeta>
        <FileMeta $spacing="-0.25px">{type}</FileMeta>
      </FileRow>
    ))}
    <FileScroll />
  </ExplorerWindow>
);

const TaskManager = () => (
  <TaskWindow>
    <TaskTitle>
      <MonitorIcon />
      Task Manager
      <WindowButtons>
        <WindowButton>
          <svg width="11" height="11" viewBox="0 0 11 11">
            <path d="M0 5.500H10" stroke="#000" />
          </svg>
        </WindowButton>
        <WindowButton>
          <svg width="11" height="11" viewBox="0 0 11 11">
            <rect x=".5" y=".5" width="9" height="9" fill="none" stroke="#000" />
          </svg>
        </WindowButton>
        <WindowButton>
          <svg width="11" height="11" viewBox="0 0 11 11">
            <path d="M.5.500 10.500 10.500M10.500.500.500 10.500" stroke="#000" />
          </svg>
        </WindowButton>
      </WindowButtons>
    </TaskTitle>
    <MenuBar>
      <span>File</span>
      <span>Options</span>
      <span>View</span>
    </MenuBar>
    <TabStrip>
      <Tab $active $width={66}>
        Processes
      </Tab>
      {tabs.map(([label, width]) => (
        <Tab key={label} $width={width}>
          {label}
        </Tab>
      ))}
    </TabStrip>
    <TableHead>
      <HeadCell>
        <SortMark width="10" height="6" viewBox="0 0 10 6">
          <path d="M1 5 5 1 9 5" fill="none" stroke="#66708a" strokeWidth="1.300" />
        </SortMark>
        Name
      </HeadCell>
      <HeadCell>Status</HeadCell>
      <HeadCell $numeric>
        <Total>27%</Total>
        CPU
      </HeadCell>
      <HeadCell $numeric>
        <Total>85%</Total>
        Memory
      </HeadCell>
      <HeadCell $numeric>
        <Total>11%</Total>
        Disk
      </HeadCell>
      <HeadCell $last />
    </TableHead>
    <TableArea>
      <Rows>
        {processes.map((process, i) => (
          <ProcessRow key={i} process={process} />
        ))}
      </Rows>
      <VerticalScroll>
        <ScrollArrow>
          <Chevron dir="up" size={9} weight={2} />
        </ScrollArrow>
        <VerticalThumb />
        <ScrollArrow>
          <Chevron dir="down" size={9} weight={2} />
        </ScrollArrow>
      </VerticalScroll>
    </TableArea>
    <HorizontalScroll>
      <ScrollArrow>
        <Chevron dir="left" size={9} weight={2} />
      </ScrollArrow>
      <HorizontalThumb />
      <ScrollArrow>
        <Chevron dir="right" size={9} weight={2} />
      </ScrollArrow>
    </HorizontalScroll>
    <TaskFooter>
      <svg width="20" height="20" viewBox="0 0 20 20">
        <circle cx="10" cy="10" r="9" fill="#fff" stroke="#999" />
        <path d="M6 12 10 8 14 12" fill="none" stroke="#999" strokeWidth="1.500" />
      </svg>
      Fewer details
      <EndButton>End task</EndButton>
    </TaskFooter>
  </TaskWindow>
);

const heart = "M0 4C-5 0-4-4-2-4-1-4 0-3 0-2 0-3 1-4 2-4 4-4 5 0 0 4Z";

const BottomBar = () => (
  <Taskbar>
    <TaskbarSlot $width={48}>
      <svg width="16" height="16" viewBox="0 0 16 16">
        <path d="M0 2.300 6.500 1.400V7.500H0ZM7.500 1.200 16 0V7.500H7.500ZM0 8.500H6.500V14.600L0 13.700ZM7.500 8.500H16V16L7.500 14.800Z" fill="#fff" />
      </svg>
    </TaskbarSlot>
    <TaskbarSearch>
      <svg width="17" height="17" viewBox="0 0 17 17">
        <circle cx="10.500" cy="6.500" r="5.300" fill="none" stroke="#222" strokeWidth="1.300" />
        <path d="M6.500 10.500 1 16" stroke="#222" strokeWidth="1.400" />
      </svg>
      Type here to search
      <SearchArt width="75" height="38" viewBox="0 0 75 38">
        <circle cx="36" cy="40" r="22" fill="#5b9cf0" />
        <path d="M35 19 44 20C53 24 58 32 58 38H44L38 33 41 29 36 27 34 23ZM20 27 28 20 33 19 31 24 26 27 27 31 22 32ZM24 33 33 31 36 34 35 38H24Z" fill="#5d9a32" />
        <path d="M24 30 30 28 35 31 28 33ZM44 27 49 26 48 30Z" fill="#c6dfae" />
        <path d={heart} transform="translate(35 8) scale(1.600)" fill="#ef604f" />
        <path d={heart} transform="translate(17 13) rotate(-15) scale(1.150)" fill="#2fa45a" />
        <path d={heart} transform="translate(56 13) rotate(20) scale(1.400)" fill="#f5b934" />
        <path d={heart} transform="translate(6 30) rotate(20) scale(1.300)" fill="#a984dc" />
        <path d={heart} transform="translate(64 31) rotate(-20) scale(1.150)" fill="#2e87d4" />
      </SearchArt>
    </TaskbarSearch>
    <TaskbarSlot $width={48}>
      <svg width="16" height="16" viewBox="0 0 16 16">
        <path d="M1 1.500V3.500H10V1.500M1 14.500V12.500H10V14.500M1.500 5.500H9.500V10.500H1.500ZM13.500 1V4M13.500 9V15" fill="none" stroke="#fff" />
        <path d="M12.500 5.500H15V8H12.500Z" fill="#fff" />
      </svg>
    </TaskbarSlot>
    <TaskbarSlot $width={48} $margin="0 4px 0 3px">
      <EdgeLogo size={24} />
    </TaskbarSlot>
    <TaskbarSlot $width={40} $running $margin="0 4px 0 1px">
      <ExplorerFolder size={22} />
    </TaskbarSlot>
    <TaskbarSlot $width={48} $margin="0 2px 0 0">
      <FirefoxLogo size={25} id="foxTaskbar" />
    </TaskbarSlot>
    <TaskbarSlot $width={48} $active $running>
      <StackedMonitors />
    </TaskbarSlot>
    <Tray>
      <TraySlot>
        <svg width="14" height="9" viewBox="0 0 14 9">
          <path d="M1 8 7 2 13 8" fill="none" stroke="#fff" strokeWidth="1.300" />
        </svg>
      </TraySlot>
      <TraySlot>
        <svg width="12" height="13" viewBox="0 0 12 13">
          <rect x=".5" y=".5" width="11" height="12" fill="#273241" stroke="#b5cfdf" />
          <path d="M2 3H10M2 5H10M2 7H10" stroke="#8a4f50" strokeDasharray="1 1" />
          <rect x="1" y="8" width="10" height="4" fill="#69bff0" />
        </svg>
      </TraySlot>
      <TraySlot>
        <svg width="12" height="16" viewBox="0 0 12 16">
          <rect x="1.500" y="4.500" width="7" height="7" rx="1.500" fill="none" stroke="#fff" />
          <path d="M8.500 7 11 5.500V10.500L8.500 9M2 2Q5.500-.5 9 2M2 14Q5.500 16.500 9 14" fill="none" stroke="#fff" />
        </svg>
      </TraySlot>
      <TraySlot>
        <svg width="17" height="15" viewBox="0 0 17 15">
          <path d="M5.500 1.500H16.500V10.500H4.500V6M.5 1.500H4.500V5.500H.5ZM2.500 5.500V13.500H13M9.500 10.500V13.500" fill="none" stroke="#fff" />
        </svg>
      </TraySlot>
      <TraySlot>
        <svg width="17" height="14" viewBox="0 0 17 14">
          <path d="M.5 5V9.500H3L6.500 13V1.500L3 5ZM9 5Q10.500 7 9 9.500M11.500 3Q14 7 11.500 11.500M14 1Q18 7 14 13.500" fill="none" stroke="#fff" />
        </svg>
      </TraySlot>
      <Clock>
        1:39 PM
        <br />
        8/26/2024
      </Clock>
      <TaskbarSlot $width={40} $margin="0 9px 0 0">
        <svg width="17" height="17" viewBox="0 0 17 17">
          <path d="M.5.5H16.500V12.500H11.500L8.500 15.500 5.500 12.500H.5Z" fill="none" stroke="#fff" />
        </svg>
      </TaskbarSlot>
      <ShowDesktop />
    </Tray>
  </Taskbar>
);

const App = () => (
  <Desktop>
    <GlobalStyle />
    <ShortcutGrid>
      {shortcuts.map((item, i) =>
        item ? (
          <Shortcut key={i} $spacing={item.spacing}>
            <ShortcutIcon>
              {item.icon}
              {!item.plain && <ShortcutArrow />}
            </ShortcutIcon>
            {item.label}
          </Shortcut>
        ) : (
          <div key={i} />
        )
      )}
    </ShortcutGrid>
    <Explorer />
    <TaskManager />
    <Watermark>
      <WatermarkWord $squeeze={0.61}>ANY</WatermarkWord>
      <svg width="56" height="64" viewBox="0 0 56 64">
        <path d="M8 8Q3 7 3 12V51Q3 56 8 53L47 31" fill="none" stroke="currentColor" strokeWidth="4" />
        <path d="M13 40V7Q13 2 18 5L50 24Q54 27 51 30L49 31" fill="none" stroke="currentColor" strokeWidth="4" />
        <path d="M17 17 45 31M12 60Q15 62 18 60L50 40Q55 36 50 33L17 15" fill="none" stroke="currentColor" strokeWidth="4" />
      </svg>
      <WatermarkWord $squeeze={0.6}>RUN</WatermarkWord>
    </Watermark>
    <BottomBar />
  </Desktop>
);

export default App;
